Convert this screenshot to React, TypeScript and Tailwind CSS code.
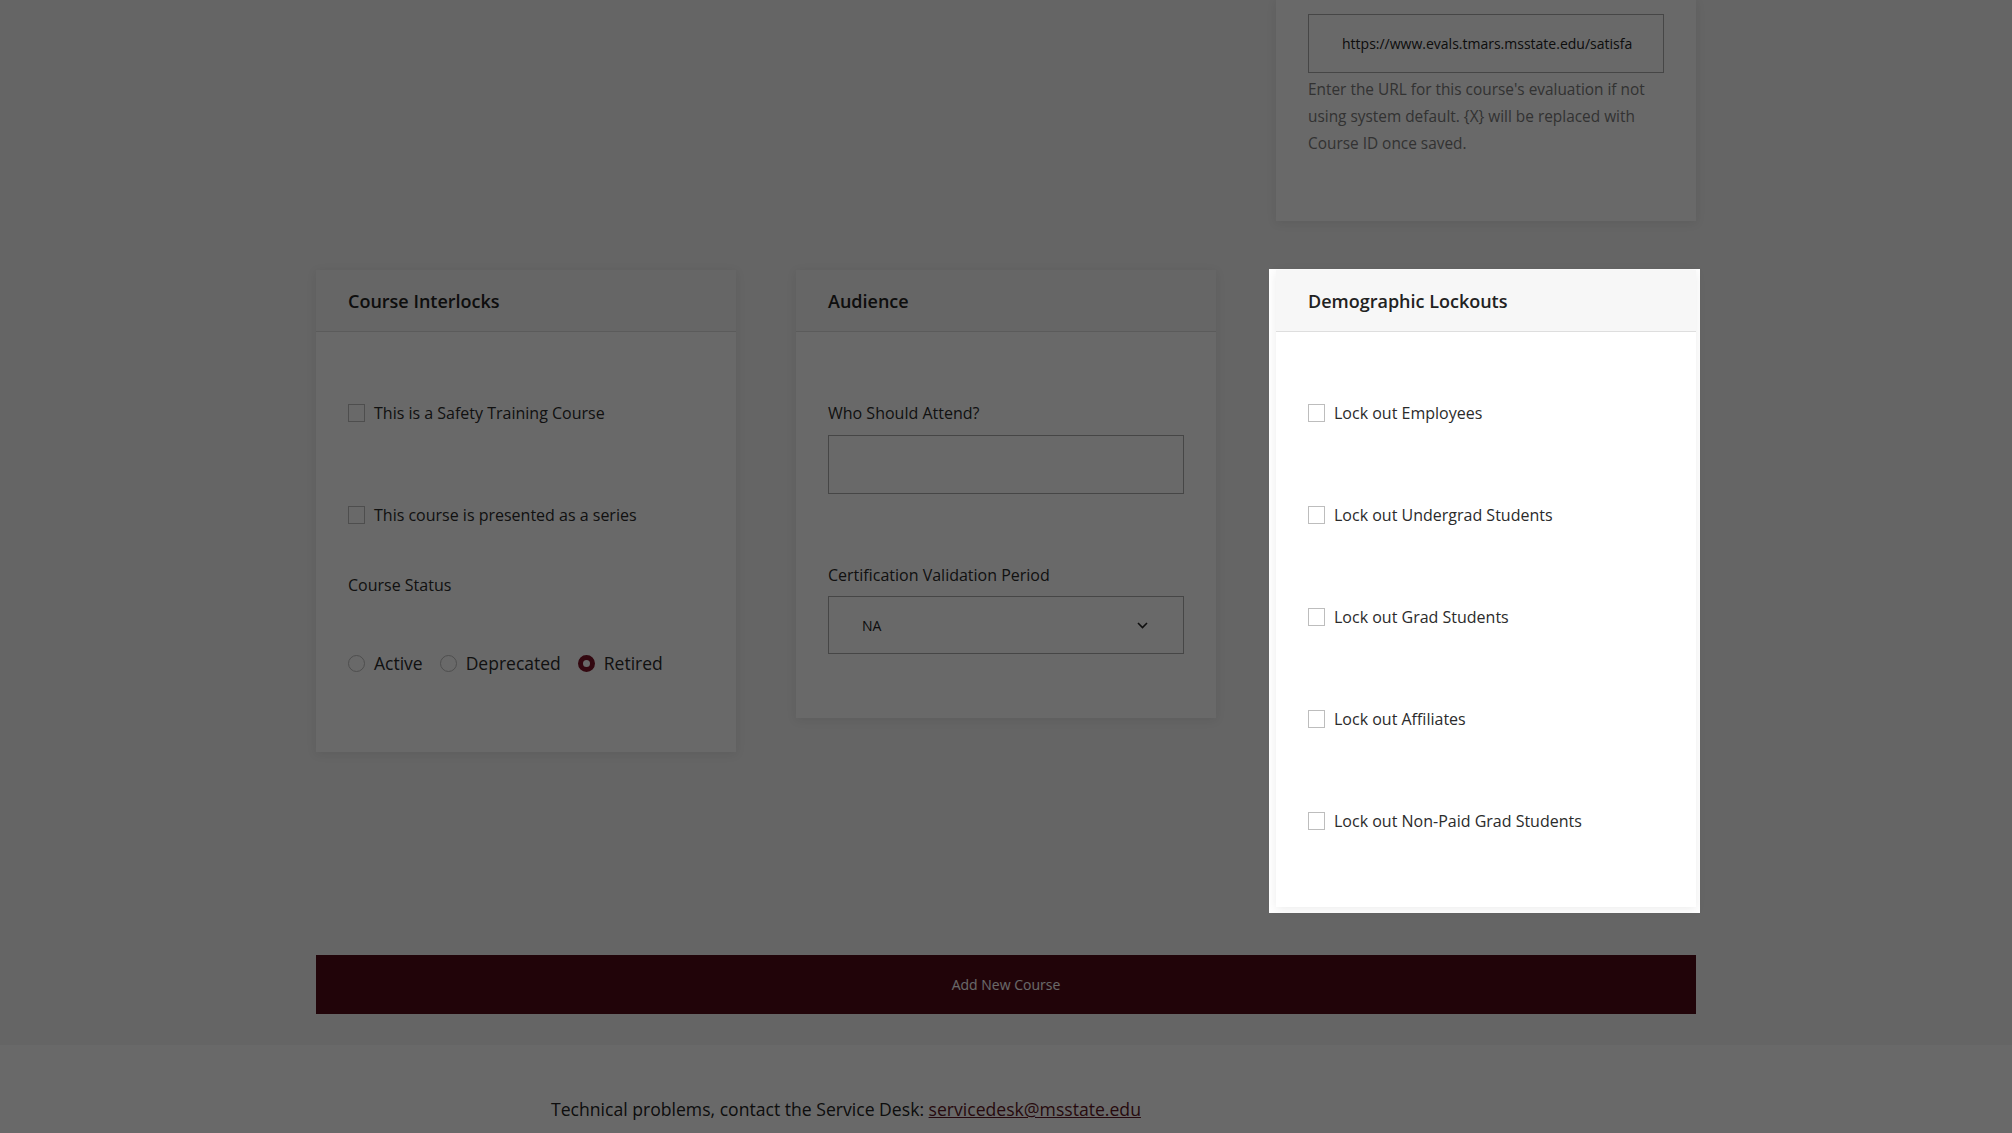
import { ReactNode } from "react";

const Checkbox = ({ label }: { label: string }) => (
  <label className="flex h-[22px] items-center gap-[9px] text-[16px] text-[#2b2b2b]">
    <span className="h-[18px] w-[17px] shrink-0 border border-[#bdbdbd] bg-white" />
    <span>{label}</span>
  </label>
);

const Radio = ({ label, checked }: { label: string; checked?: boolean }) => (
  <label className="flex h-[22px] items-center gap-[9px] text-[17.5px] text-[#2b2b2b]">
    {checked ? (
      <span className="h-[17px] w-[17px] shrink-0 rounded-full border-[5px] border-[#7c1427] bg-white" />
    ) : (
      <span className="h-[17px] w-[17px] shrink-0 rounded-full border border-[#bdbdbd] bg-white" />
    )}
    <span>{label}</span>
  </label>
);

const Card = ({ title, children }: { title: string; children: ReactNode }) => (
  <div className="relative bg-white shadow-[0_2px_10px_rgba(0,0,0,0.08)]">
    <div className="flex h-[62px] items-center border-b border-[#dedede] bg-[#f7f7f7] px-8 pt-[2px]">
      <h2 className="text-[18px] font-semibold text-[#222]">{title}</h2>
    </div>
    {children}
  </div>
);

export default function App() {
  return (
    <div className="min-h-screen bg-[#f4f4f4] font-['Open_Sans',sans-serif]">
      <div className="mx-auto w-[1380px]">
        <div className="grid grid-cols-3 gap-x-[60px]">
          <div />
          <div />
          <div className="bg-white px-8 pt-[14px] pb-[64px] shadow-[0_2px_10px_rgba(0,0,0,0.08)]">
            <input
              readOnly
              value="https://www.evals.tmars.msstate.edu/satisfaction/{X}"
              className="h-[59px] w-full border border-[#aaaaaa] bg-white pr-[31px] pl-[33px] text-[14px] text-[#222] outline-none"
            />
            <p className="mt-[3px] text-[15.4px] leading-[27px] text-[#7a7a7a]">
              Enter the URL for this course's evaluation if not using system default. {"{X}"} will be replaced with
              Course ID once saved.
            </p>
          </div>
        </div>

        <div className="mt-[49px] grid grid-cols-3 items-start gap-x-[60px]">
          <Card title="Course Interlocks">
            <div className="px-8 pt-[70px] pb-[78px]">
              <Checkbox label="This is a Safety Training Course" />
              <div className="mt-[80px]">
                <Checkbox label="This course is presented as a series" />
              </div>
              <p className="mt-[47px] h-[24px] text-[16px] leading-[24px] text-[#2b2b2b]">Course Status</p>
              <div className="mt-[55px] flex gap-[17px]">
                <Radio label="Active" />
                <Radio label="Deprecated" />
                <Radio label="Retired" checked />
              </div>
            </div>
          </Card>

          <Card title="Audience">
            <div className="px-8 pt-[70px] pb-[64px]">
              <p className="h-[22px] text-[16px] leading-[22px] text-[#2b2b2b]">Who Should Attend?</p>
              <input className="mt-[11px] h-[59px] w-full border border-[#aaaaaa] bg-white px-[33px] text-[14px] outline-none" />
              <p className="mt-[70px] h-[22px] text-[16px] leading-[22px] text-[#2b2b2b]">Certification Validation Period</p>
              <div className="mt-[10px] flex h-[58px] items-center justify-between border border-[#aaaaaa] bg-white pr-[35px] pl-[33px] text-[14px] text-[#222]">
                <span>NA</span>
                <svg width="11" height="7" viewBox="0 0 11 7" fill="none">
                  <path d="M1 1l4.5 4.5L10 1" stroke="#222" strokeWidth="1.6" />
                </svg>
              </div>
            </div>
          </Card>

          <div className="relative z-10">
            <div className="absolute -top-[1px] -right-[4px] -bottom-[6px] -left-[7px] bg-white shadow-[0_0_0_9999px_rgba(0,0,0,0.59)]" />
            <Card title="Demographic Lockouts">
              <div className="flex flex-col gap-[80px] px-8 pt-[70px] pb-[75px]">
                <Checkbox label="Lock out Employees" />
                <Checkbox label="Lock out Undergrad Students" />
                <Checkbox label="Lock out Grad Students" />
                <Checkbox label="Lock out Affiliates" />
                <Checkbox label="Lock out Non-Paid Grad Students" />
              </div>
            </Card>
          </div>
        </div>

        <button type="button" className="mt-[48px] h-[59px] w-full bg-[#520a17] text-[14px] text-white">
          Add New Course
        </button>
      </div>

      <footer className="mt-[31px] bg-white pt-[51px] pb-[60px]">
        <div className="mx-auto w-[1380px] pl-[235px] text-[17.6px] leading-[27px] text-[#222]">
          Technical problems, contact the Service Desk:{" "}
          <a href="#" className="text-[#5d1725] underline">
            servicedesk@msstate.edu
          </a>
        </div>
      </footer>
    </div>
  );
}
